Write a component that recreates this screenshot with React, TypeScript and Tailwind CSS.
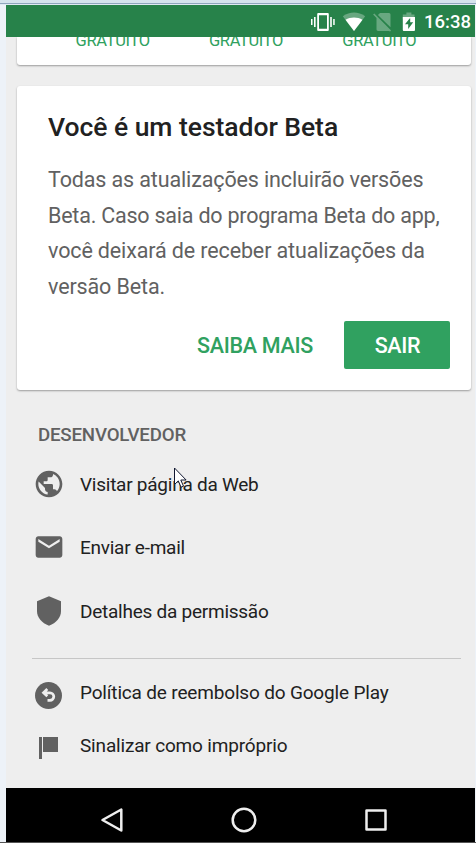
import type { ReactNode } from "react";

function StatusBar() {
    return (
        <div className="relative z-10 flex h-8 shrink-0 items-center justify-end bg-[#27824a] pr-1 text-white">
            <svg className="h-6 w-[26px]" viewBox="0 0 26 24" fill="currentColor">
                <path d="M1 10h1.5v6H1zM4 8h1.6v10H4zM20.2 8h1.6v10h-1.6zM23.2 10h1.5v6h-1.5z" />
                <path fillRule="evenodd" d="M8.2 4h9.6a1 1 0 0 1 1 1v16a1 1 0 0 1-1 1H8.2a1 1 0 0 1-1-1V5a1 1 0 0 1 1-1zM9 6.3v13.4h8V6.3z" />
            </svg>
            <svg className="ml-[6px] h-6 w-6" viewBox="0 0 24 24" fill="currentColor">
                <path opacity=".3" d="M.8 7.2C8 2.3 16 2.3 23.2 7.2L12 22z" />
                <path d="M3.5 10.7C8.5 7.6 15.5 7.6 20.5 10.7L12 22z" />
            </svg>
            <svg className="ml-[6px] h-6 w-5" viewBox="0 0 20 24" fill="currentColor" opacity=".3">
                <path d="M8 4h9a1.5 1.5 0 0 1 1.5 1.5v12.7L5.9 6z" />
                <path d="M2.3 4.4L1.1 5.6 4.5 9v11.3c0 .9.7 1.7 1.6 1.7h10.8l1.2.4 1-1z" />
            </svg>
            <svg className="ml-2 h-6 w-[18px]" viewBox="0 0 18 24" fill="currentColor">
                <path opacity=".3" d="M6.4 3.5h5V5.5h3.1V10H2.8V5.5h3.6z" />
                <path fillRule="evenodd" d="M2.8 8H15v13a1 1 0 0 1-1 1H3.8a1 1 0 0 1-1-1zM10.2 8.8L5 15.3h3.2v4.7l5-6.7H10.2z" />
            </svg>
            <span className="mt-[2px] ml-[6px] text-[18.5px] leading-none font-medium">16:38</span>
        </div>
    );
}

function MenuRow({ icon, label, className }: { icon: ReactNode; label: string; className: string }) {
    return (
        <li className={"flex items-center " + className}>
            <span className="flex w-[45px] shrink-0">{icon}</span>
            <span className="text-[19px] leading-6 text-[#212121]">{label}</span>
        </li>
    );
}

function PlayPage() {
    return (
        <main className="flex flex-1 flex-col bg-[#eeeeee]">
            <section className="mr-1 ml-[11px] grid h-7 grid-cols-3 rounded-b-[3px] bg-white pr-[25px] pl-[29px] text-center text-[16.5px] leading-5 tracking-[-0.35px] text-[#30a160] shadow-[0_1px_2px_rgba(0,0,0,0.35)]">
                <span className="-mt-[6px]">GRATUITO</span>
                <span className="-mt-[6px]">GRATUITO</span>
                <span className="-mt-[6px]">GRATUITO</span>
            </section>

            <section className="mt-[21px] mr-1 ml-[11px] h-[304px] rounded-[3px] bg-white px-[31px] pt-[25px] shadow-[0_1px_2px_rgba(0,0,0,0.35)]">
                <h1 className="text-[26.5px] leading-8 font-medium tracking-[-0.04px] text-[#212121]">Você é um testador Beta</h1>
                <p className="mt-[19px] -mr-8 text-[21.5px] leading-[35.7px] tracking-[-0.13px] whitespace-nowrap text-[#616161]">
                    Todas as atualizações incluirão versões<br />
                    <span className="tracking-[-0.22px]">Beta. Caso saia do programa Beta do app,</span><br />
                    você deixará de receber atualizações da<br />
                    versão Beta.
                </p>
                <div className="mt-4 -mr-[10px] flex items-center justify-end text-[21.5px] font-medium tracking-[-0.3px]">
                    <button className="mt-[3px] mr-[31px] text-[#30a160]">SAIBA MAIS</button>
                    <button className="h-12 w-[106px] rounded-[2px] bg-[#30a160] pt-[3px] pl-px text-white">SAIR</button>
                </div>
            </section>

            <h2 className="mt-[33px] ml-8 text-[18.7px] leading-6 font-medium tracking-[-0.2px] text-[#616161]">DESENVOLVEDOR</h2>
            <ul className="ml-[29px] tracking-[-0.25px] text-[#616161]">
                <MenuRow
                    className="mt-[6px] h-[63px]"
                    label="Visitar página da Web"
                    icon={
                        <svg className="-mt-[2px] -ml-[2.5px] h-8 w-8 shrink-0" viewBox="0 0 24 24" fill="currentColor">
                            <path d="M12 2C6.48 2 2 6.48 2 12s4.48 10 10 10 10-4.48 10-10S17.52 2 12 2zm-1 17.93c-3.95-.49-7-3.85-7-7.93 0-.62.08-1.21.21-1.79L9 15v1c0 1.1.9 2 2 2v1.93zm6.9-2.54c-.26-.81-1-1.39-1.9-1.39h-1v-3c0-.55-.45-1-1-1H8v-2h2c.55 0 1-.45 1-1V7h2c1.1 0 2-.9 2-2v-.41c2.93 1.19 5 4.06 5 7.41 0 2.08-.8 3.97-2.1 5.39z" />
                        </svg>
                    }
                />
                <MenuRow
                    className="h-16"
                    label="Enviar e-mail"
                    icon={
                        <svg className="-mt-[2px] -ml-[2.5px] h-8 w-8 shrink-0" viewBox="0 0 24 24" fill="currentColor">
                            <path d="M20 4H4c-1.1 0-1.99.9-1.99 2L2 18c0 1.1.9 2 2 2h16c1.1 0 2-.9 2-2V6c0-1.1-.9-2-2-2zm0 4l-8 5-8-5V6l8 5 8-5v2z" />
                        </svg>
                    }
                />
                <MenuRow
                    className="h-[63px]"
                    label="Detalhes da permissão"
                    icon={
                        <svg className="-mt-[2px] -ml-[2.5px] h-8 w-8 shrink-0" viewBox="0 0 24 24" fill="currentColor">
                            <path d="M12 1L3 4.6V12c0 5 3.5 9 9 11 5.5-2 9-6 9-11V4.6L12 1z" />
                        </svg>
                    }
                />
            </ul>
            <hr className="mt-[15px] mr-[14px] ml-[26px] border-[#c6c6c6]" />
            <ul className="ml-[29px] tracking-[-0.17px] text-[#616161]">
                <MenuRow
                    className="mt-[7px] h-[53px]"
                    label="Política de reembolso do Google Play"
                    icon={
                        <svg className="mt-[5px] h-[27px] w-[27px]" viewBox="0 0 27 27">
                            <circle cx="13.5" cy="13.5" r="13.5" fill="#616161" />
                            <path d="M9 10.8h6a3.7 3.7 0 0 1 0 7.6H12.5M12.3 7L8.5 10.8l3.8 3.5" fill="none" stroke="#eee" strokeWidth="2.7" />
                        </svg>
                    }
                />
                <MenuRow
                    className="h-[53px]"
                    label="Sinalizar como impróprio"
                    icon={
                        <svg className="mt-[5px] ml-1 h-[22px] w-5" viewBox="0 0 20 22" fill="currentColor">
                            <path d="M0 0h3v22H0zM4 0h15v15H4z" />
                        </svg>
                    }
                />
            </ul>
        </main>
    );
}

function NavBar() {
    return (
        <div className="flex h-[54px] shrink-0 items-center bg-black pt-[9px]">
            <svg className="ml-[94px] h-[26px] w-[26px]" viewBox="0 0 26 26" fill="none" stroke="#eee" strokeWidth="2.5" strokeLinejoin="round">
                <path d="M21.3 2.5v21L2.5 13z" />
            </svg>
            <svg className="ml-[105px] h-[26px] w-[26px]" viewBox="0 0 26 26" fill="none" stroke="#eee" strokeWidth="2.5">
                <circle cx="13" cy="13" r="11.3" />
            </svg>
            <svg className="ml-[106px] h-[26px] w-[26px]" viewBox="0 0 26 26" fill="none" stroke="#eee" strokeWidth="2.5" strokeLinejoin="round">
                <rect x="3.5" y="3.5" width="19" height="19" />
            </svg>
        </div>
    );
}

export default function App() {
    return (
        <div className="relative flex h-[843px] w-[476px] flex-col overflow-hidden bg-[#edf2f8] font-['Roboto',sans-serif]">
            <div className="h-[5px] shrink-0 border-b border-[#dfe9f2] bg-[#d5e3ed] pt-[3px]">
                <div className="h-px bg-[#8fa6bd]" />
            </div>
            <div className="mr-px ml-[6px] flex flex-1 flex-col">
                <StatusBar />
                <PlayPage />
                <NavBar />
            </div>
            <div className="h-px shrink-0 bg-[#555]" />
            <svg className="absolute top-[467px] left-[174px] h-[22px] w-[14px]" viewBox="0 0 14 22">
                <path d="M.5 1v16.5l3.8-3.6 2.7 6.3 2.5-1-2.7-6.2h5.3z" fill="#fff" stroke="#111831" />
            </svg>
        </div>
    );
}
